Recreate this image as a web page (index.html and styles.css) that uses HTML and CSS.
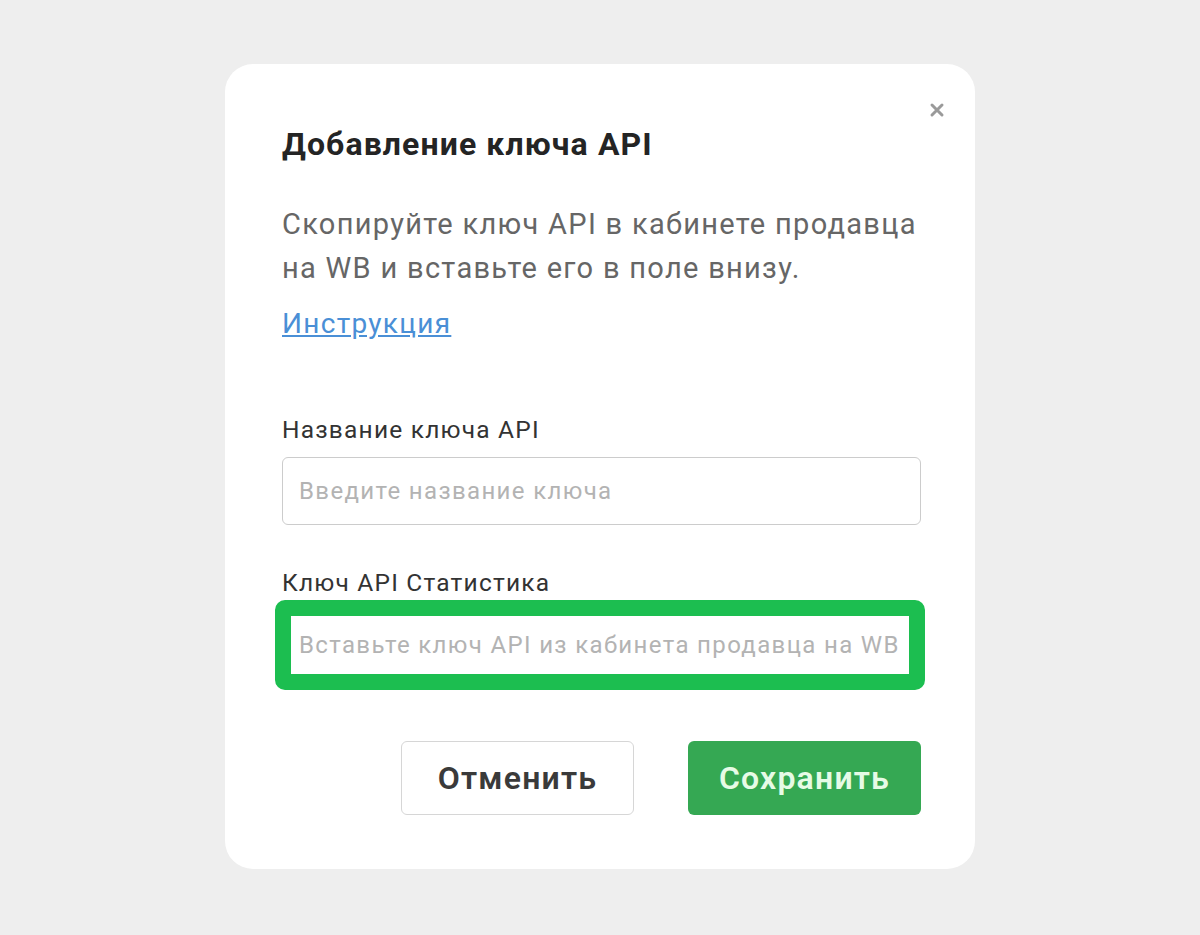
FILE: index.html
```html
<!DOCTYPE html>
<html lang="ru">
<head>
    <meta charset="UTF-8">
    <meta name="viewport" content="width=device-width, initial-scale=1.0">
    <title>Добавление ключа API</title>
    <link rel="stylesheet" href="styles.css">
</head>
<body>

<div class="modal">
    <button type="button" class="close" aria-label="Закрыть">
        <svg width="16" height="16" viewBox="0 0 16 16">
            <path d="M3 3 L13 13 M13 3 L3 13" stroke="#9a9a9a" stroke-width="3" stroke-linecap="round"/>
        </svg>
    </button>

    <h1>Добавление ключа API</h1>

    <p class="hint">Скопируйте ключ API в кабинете продавца на WB и вставьте его в поле внизу.</p>

    <a href="#" class="link">Инструкция</a>

    <form class="form">
        <div class="field">
            <label for="keyName">Название ключа API</label>
            <input type="text" id="keyName" placeholder="Введите название ключа">
        </div>

        <div class="field">
            <label for="keyValue">Ключ API Статистика</label>
            <!-- зелёная рамка-подсветка вокруг поля ключа -->
            <div class="highlight">
                <input type="text" id="keyValue" placeholder="Вставьте ключ API из кабинета продавца на WB">
            </div>
        </div>

        <div class="actions">
            <button type="button" class="btn btn-cancel">Отменить</button>
            <button type="button" class="btn btn-save">Сохранить</button>
        </div>
    </form>
</div>

</body>
</html>
```

FILE: styles.css
```css
body {
    font-family: 'Roboto', 'Liberation Sans', sans-serif;
    background-color: #eeeeee;
    margin: 0;
    padding: 64px 0 0;
    min-height: 100vh;
    box-sizing: border-box;
    display: flex;
    flex-direction: column;
    align-items: center;
    color: #333;
}
.modal {
    position: relative;
    width: 750px;
    height: 805px;
    box-sizing: border-box;
    background-color: #fff;
    border-radius: 28px;
    padding: 60px 54px 54px 57px;
}
.close {
    position: absolute;
    top: 34px;
    right: 26px;
    background: none;
    border: none;
    padding: 4px;
    cursor: pointer;
    line-height: 0;
}
h1 {
    margin: 0;
    font-size: 32px;
    line-height: 40px;
    letter-spacing: 1.1px;
    font-weight: 700;
    color: #242424;
}
.hint {
    margin: 38px 0 0;
    font-size: 29px;
    line-height: 44px;
    letter-spacing: 1.3px;
    color: #666;
}
.link {
    display: block;
    width: max-content;
    margin-top: 16px;
    font-size: 28px;
    line-height: 36px;
    letter-spacing: 1.3px;
    color: #4a8fd6;
    text-decoration: underline;
}
.form {
    margin-top: 73px;
}
.field {
    display: flex;
    flex-direction: column;
}
.field + .field {
    margin-top: 43px;
}
label {
    font-size: 24.5px;
    line-height: 30px;
    letter-spacing: 1.2px;
    color: #333;
    margin-bottom: 12px;
}
input[type="text"] {
    font-family: inherit;
    font-size: 24px;
    letter-spacing: 1.35px;
    color: #333;
    height: 68px;
    padding: 0 16px;
    border: 1px solid #cccccc;
    border-radius: 6px;
    box-sizing: border-box;
    width: 100%;
    outline: none;
}
input::placeholder {
    color: #b3b3b3;
}
.highlight {
    margin: -10px -4px 0 -7px;
    border: 16px solid #1cbe50;
    border-radius: 10px;
}
.highlight input[type="text"] {
    height: 58px;
    border: none;
    border-radius: 0;
    padding: 0 8px;
}
.actions {
    display: flex;
    justify-content: flex-end;
    gap: 54px;
    margin-top: 51px;
}
.btn {
    font-family: inherit;
    font-size: 32px;
    letter-spacing: 1.2px;
    font-weight: 600;
    width: 233px;
    height: 74px;
    border-radius: 6px;
    cursor: pointer;
}
.btn-cancel {
    background-color: #fff;
    color: #3a3a3a;
    border: 1px solid #d6d6d6;
}
.btn-save {
    background-color: #35a853;
    color: #e6fbe6;
    border: none;
}
```
